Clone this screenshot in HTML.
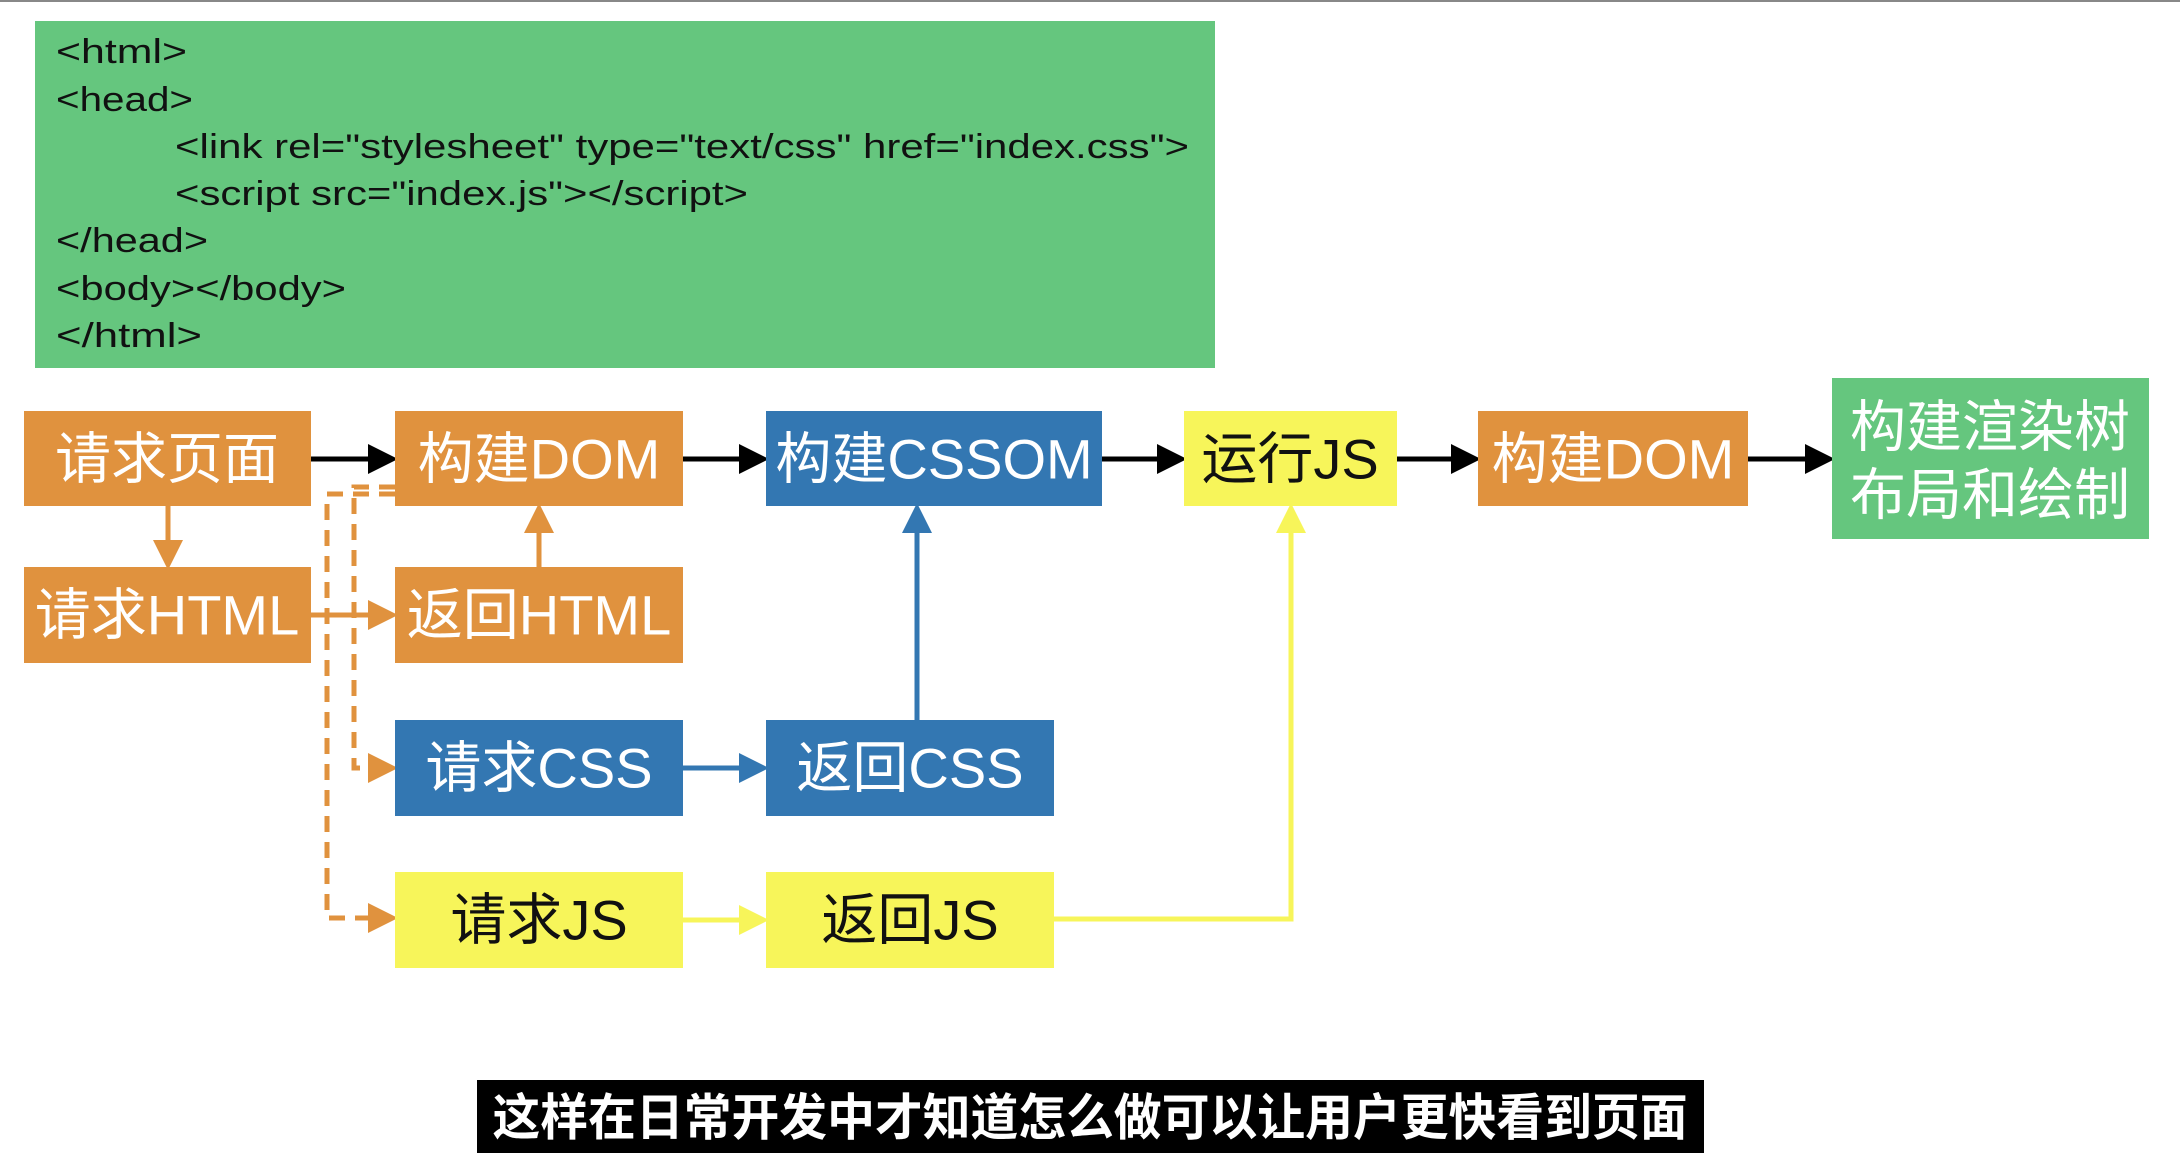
<!DOCTYPE html>
<html><head><meta charset="utf-8"><style>
html,body{margin:0;padding:0;background:#fff;width:2180px;height:1164px;overflow:hidden}
svg{display:block}
.c{font-family:"Liberation Sans","Noto Sans CJK SC",sans-serif;font-size:34px;fill:#111}
.b{font-family:"Liberation Sans","Noto Sans CJK SC",sans-serif;font-size:56px;text-anchor:middle;dominant-baseline:central}
</style></head><body>
<svg width="2180" height="1164" viewBox="0 0 2180 1164">
<defs>
<marker id="ak" markerWidth="6" markerHeight="6" refX="5" refY="3" orient="auto" markerUnits="strokeWidth"><path d="M0,0 L6,3 L0,6 z" fill="#000"/></marker>
<marker id="ao" markerWidth="6" markerHeight="6" refX="5" refY="3" orient="auto" markerUnits="strokeWidth"><path d="M0,0 L6,3 L0,6 z" fill="#e0923e"/></marker>
<marker id="ab" markerWidth="6" markerHeight="6" refX="5" refY="3" orient="auto" markerUnits="strokeWidth"><path d="M0,0 L6,3 L0,6 z" fill="#3377b2"/></marker>
<marker id="ay" markerWidth="6" markerHeight="6" refX="5" refY="3" orient="auto" markerUnits="strokeWidth"><path d="M0,0 L6,3 L0,6 z" fill="#f7f55a"/></marker>
</defs>
<rect x="0" y="0" width="2180" height="2" fill="#888"/>
<rect x="35" y="21" width="1180" height="347" fill="#65c67e"/>
<text class="c" x="56" y="63" textLength="131" lengthAdjust="spacingAndGlyphs">&lt;html&gt;</text>
<text class="c" x="56" y="111" textLength="137" lengthAdjust="spacingAndGlyphs">&lt;head&gt;</text>
<text class="c" x="175" y="158" textLength="1014" lengthAdjust="spacingAndGlyphs">&lt;link rel="stylesheet" type="text/css" href="index.css"&gt;</text>
<text class="c" x="175" y="205" textLength="573" lengthAdjust="spacingAndGlyphs">&lt;script src="index.js"&gt;&lt;/script&gt;</text>
<text class="c" x="56" y="252" textLength="152" lengthAdjust="spacingAndGlyphs">&lt;/head&gt;</text>
<text class="c" x="56" y="300" textLength="290" lengthAdjust="spacingAndGlyphs">&lt;body&gt;&lt;/body&gt;</text>
<text class="c" x="56" y="347" textLength="146" lengthAdjust="spacingAndGlyphs">&lt;/html&gt;</text>

<!-- arrows -->
<g stroke-width="5" fill="none">
<line x1="311" y1="459" x2="393" y2="459" stroke="#000" marker-end="url(#ak)"/>
<line x1="683" y1="459" x2="764" y2="459" stroke="#000" marker-end="url(#ak)"/>
<line x1="1102" y1="459" x2="1182" y2="459" stroke="#000" marker-end="url(#ak)"/>
<line x1="1397" y1="459" x2="1476" y2="459" stroke="#000" marker-end="url(#ak)"/>
<line x1="1748" y1="459" x2="1830" y2="459" stroke="#000" marker-end="url(#ak)"/>
<line x1="168" y1="506" x2="168" y2="565" stroke="#e0923e" marker-end="url(#ao)"/>
<line x1="539" y1="567" x2="539" y2="508" stroke="#e0923e" marker-end="url(#ao)"/>
<line x1="311" y1="615" x2="393" y2="615" stroke="#e0923e" marker-end="url(#ao)"/>
<line x1="917" y1="720" x2="917" y2="508" stroke="#3377b2" marker-end="url(#ab)"/>
<line x1="683" y1="768" x2="764" y2="768" stroke="#3377b2" marker-end="url(#ab)"/>
<line x1="683" y1="920" x2="764" y2="920" stroke="#f7f55a" marker-end="url(#ay)"/>
<polyline points="1054,919 1291,919 1291,508" stroke="#f7f55a" marker-end="url(#ay)"/>
<polyline points="395,494 327,494 327,918 393,918" stroke="#e0923e" stroke-dasharray="16,10" marker-end="url(#ao)"/>
<polyline points="395,487 354,487 354,768 393,768" stroke="#e0923e" stroke-dasharray="16,10" marker-end="url(#ao)"/>
</g>

<!-- boxes -->
<rect x="24" y="411" width="287" height="95" fill="#e0923e"/><text class="b" x="167" y="459" fill="#fff">请求页面</text>
<rect x="395" y="411" width="288" height="95" fill="#e0923e"/><text class="b" x="539" y="459" fill="#fff">构建DOM</text>
<rect x="766" y="411" width="336" height="95" fill="#3377b2"/><text class="b" x="934" y="459" fill="#fff">构建CSSOM</text>
<rect x="1184" y="411" width="213" height="95" fill="#f7f55a"/><text class="b" x="1290" y="459" fill="#111">运行JS</text>
<rect x="1478" y="411" width="270" height="95" fill="#e0923e"/><text class="b" x="1613" y="459" fill="#fff">构建DOM</text>
<rect x="1832" y="378" width="317" height="161" fill="#65c67e"/>
<text class="b" x="1990" y="427" fill="#fff">构建渲染树</text>
<text class="b" x="1990" y="495" fill="#fff">布局和绘制</text>
<rect x="24" y="567" width="287" height="96" fill="#e0923e"/><text class="b" x="167" y="615" fill="#fff">请求HTML</text>
<rect x="395" y="567" width="288" height="96" fill="#e0923e"/><text class="b" x="539" y="615" fill="#fff">返回HTML</text>
<rect x="395" y="720" width="288" height="96" fill="#3377b2"/><text class="b" x="539" y="768" fill="#fff">请求CSS</text>
<rect x="766" y="720" width="288" height="96" fill="#3377b2"/><text class="b" x="910" y="768" fill="#fff">返回CSS</text>
<rect x="395" y="872" width="288" height="96" fill="#f7f55a"/><text class="b" x="539" y="920" fill="#111">请求JS</text>
<rect x="766" y="872" width="288" height="96" fill="#f7f55a"/><text class="b" x="910" y="920" fill="#111">返回JS</text>

<rect x="477" y="1080" width="1227" height="73" fill="#000"/>
<text x="1090" y="1118" font-family="'Liberation Sans','Noto Sans CJK SC',sans-serif" font-size="50" font-weight="bold" fill="#fff" text-anchor="middle" dominant-baseline="central" textLength="1195" lengthAdjust="spacingAndGlyphs">这样在日常开发中才知道怎么做可以让用户更快看到页面</text>
</svg>
</body></html>
